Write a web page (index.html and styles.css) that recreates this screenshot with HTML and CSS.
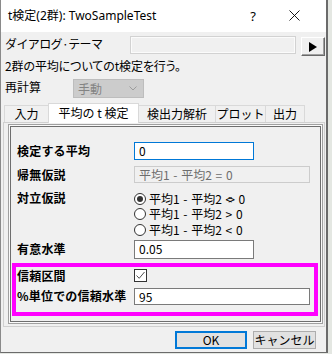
FILE: index.html
```html
<!DOCTYPE html>
<html lang="ja">
<head>
<meta charset="utf-8">
<title>t検定(2群): TwoSampleTest</title>
<link rel="stylesheet" href="styles.css">
</head>
<body>
<div class="window">
  <div class="titlebar">
    <span class="title">t検定(2群): TwoSampleTest</span>
    <span class="help">?</span>
    <span class="close"><svg width="11" height="11" viewBox="0 0 11 11"><path d="M0.5 0.5L10.5 10.5M10.5 0.5L0.5 10.5" stroke="#000" stroke-width="0.9" fill="none"/></svg></span>
  </div>
  <div class="row theme-row">
    <span class="theme-lbl">ダイアログ·テーマ</span>
    <span class="theme-box"></span>
    <span class="arrow-btn"><svg width="8" height="10" viewBox="0 0 8 10"><path d="M0 0L8 5L0 10Z" fill="#000"/></svg></span>
  </div>
  <div class="desc">2群の平均についてのt検定を行う。</div>
  <div class="row recalc-row">
    <span class="recalc-lbl">再計算</span>
    <span class="combo"><span>手動</span><svg width="8" height="5" viewBox="0 0 8 5"><path d="M0.5 0.5L4 4L7.5 0.5" stroke="#9c9c9c" stroke-width="1" fill="none"/></svg></span>
  </div>
  <div class="tabs">
    <span class="tab t1">入力</span>
    <span class="tab active t2">平均の t 検定</span>
    <span class="tab t3">検出力解析</span>
    <span class="tab t4">プロット</span>
    <span class="tab t5">出力</span>
  </div>
  <div class="panel">
    <div class="group">
      <div class="frow r1">
        <span class="flbl">検定する平均</span>
        <span class="input focus short">0</span>
      </div>
      <div class="frow r2">
        <span class="flbl">帰無仮説</span>
        <span class="input disabled long">平均1 - 平均2 = 0</span>
      </div>
      <div class="frow r3">
        <span class="flbl">対立仮説</span>
        <div class="radios">
          <div class="radio-row"><span class="radio on"></span><span>平均1 - 平均2 <span class="ne">&lt;&gt;</span> 0</span></div>
          <div class="radio-row"><span class="radio"></span><span>平均1 - 平均2 &gt; 0</span></div>
          <div class="radio-row"><span class="radio"></span><span>平均1 - 平均2 &lt; 0</span></div>
        </div>
      </div>
      <div class="frow r4">
        <span class="flbl">有意水準</span>
        <span class="input short tall">0.05</span>
      </div>
      <div class="highlight">
        <div class="frow r5">
          <span class="flbl">信頼区間</span>
          <span class="check"><svg width="11" height="11" viewBox="0 0 11 11"><path d="M1.5 5.5L4.2 8.3L9.5 2" stroke="#505050" stroke-width="1" fill="none"/></svg></span>
        </div>
        <div class="frow r6">
          <span class="flbl">%単位での信頼水準</span>
          <span class="input long">95</span>
        </div>
      </div>
    </div>
  </div>
  <div class="footer">
    <span class="btn ok">OK</span>
    <span class="btn cancel">キャンセル</span>
  </div>
</div>
</body>
</html>
```
FILE: styles.css
```css
html, body {
  margin: 0;
  padding: 0;
}
body {
  background: #e4e7e2;
  width: 332px;
  height: 354px;
  overflow: hidden;
  font-family: "Noto Sans CJK JP", "Noto Sans", sans-serif;
  font-size: 12px;
  color: #000;
}
.window {
  width: 325px;
  height: 352px;
  background: #f0f0f0;
  border-left: 1px solid #8a8a8a;
  border-right: 2px solid #6b6b6b;
  border-bottom: 1px solid #6b6b6b;
  display: flex;
  flex-direction: column;
}
.titlebar {
  height: 32px;
  background: #fff;
  display: flex;
  align-items: center;
  padding-left: 7px;
  flex-shrink: 0;
}
.title {
  font-family: "Noto Sans", "Noto Sans CJK JP", sans-serif;
  font-size: 12px;
  line-height: 16px;
  flex: 1;
  margin-top: -1px;
}
.help {
  font-family: "Noto Sans", sans-serif;
  font-size: 13px;
  width: 12px;
  text-align: center;
  margin-right: 30px;
  margin-top: -1px;
}
.close {
  width: 24px;
  display: flex;
  justify-content: flex-start;
  margin-right: 13px;
  margin-top: -1px;
}
.row {
  display: flex;
  padding-left: 4px;
  flex-shrink: 0;
}
.theme-row {
  margin-top: 4px;
  height: 21px;
  align-items: flex-start;
}
.theme-lbl {
  width: 125px;
  line-height: 13px;
  margin-top: 1px;
  letter-spacing: -0.6px;
}
.theme-box {
  width: 164px;
  height: 16px;
  border: 1px solid #d2d2d2;
  box-shadow: inset 0 0 0 1px #fbfbfb;
  background: #f0f0f0;
}
.arrow-btn {
  margin-left: 5px;
  margin-top: 1px;
  width: 22px;
  height: 17px;
  border-top: 1px solid #fff;
  border-left: 1px solid #fff;
  border-right: 1px solid #696969;
  border-bottom: 1px solid #696969;
  box-shadow: inset -1px -1px 0 #a0a0a0;
  display: flex;
  align-items: center;
  justify-content: center;
}
.desc {
  padding-left: 4px;
  margin-top: 2px;
  line-height: 14px;
  height: 14px;
  font-feature-settings: "palt";
  letter-spacing: -0.1px;
  flex-shrink: 0;
}
.recalc-row {
  margin-top: 6px;
  height: 19px;
  align-items: flex-start;
}
.recalc-lbl {
  width: 68px;
  line-height: 14px;
  margin-top: 1px;
}
.combo {
  box-sizing: border-box;
  width: 71px;
  height: 19px;
  background: #cccccc;
  border: 1px solid #bdbdbd;
  color: #838383;
  display: flex;
  align-items: center;
  justify-content: space-between;
  padding: 0 6px 0 4px;
  line-height: 14px;
}
.tabs {
  margin-top: 4px;
  margin-left: 2px;
  height: 20px;
  display: flex;
  align-items: flex-end;
  flex-shrink: 0;
}
.tab {
  box-sizing: border-box;
  height: 17px;
  border: 1px solid #d9d9d9;
  border-bottom: none;
  margin-left: -1px;
  text-align: center;
  line-height: 15px;
  background: #f0f0f0;
}
.tab.t1 { width: 45px; margin-left: 1px; }
.tab.t2 { width: 91px; }
.tab.t3 { width: 78px; }
.tab.t4 { width: 51px; }
.tab.t5 { width: 40px; }
.tab.active {
  height: 20px;
  background: #fff;
  position: relative;
  z-index: 1;
  margin-bottom: -1px;
  line-height: 17px;
}
.panel {
  margin-left: 2px;
  width: 322px;
  height: 205px;
  box-sizing: border-box;
  border: 1px solid #d0d0d0;
  padding: 1px 1px 3px 4px;
  flex-shrink: 0;
}
.group {
  box-sizing: border-box;
  width: 315px;
  height: 200px;
  border: 1px solid #a0a0a0;
  box-shadow: inset 0 0 0 1px #fafafa, inset 0 0 0 2px #6e6e6e;
  padding: 17px 0 0 8px;
  display: flex;
  flex-direction: column;
}
.frow {
  display: flex;
  align-items: center;
}
.flbl {
  width: 117px;
  flex-shrink: 0;
  font-weight: bold;
  line-height: 14px;
  letter-spacing: 0.2px;
}
.input {
  box-sizing: border-box;
  height: 18px;
  border: 1px solid #7a7a7a;
  background: #fff;
  padding-left: 4px;
  line-height: 15px;
}
.input.short { width: 120px; }
.input.long { width: 176px; height: 17px; }
.input.tall { height: 19px; line-height: 16px; }
.input.focus { border-color: #0078d7; }
.input.disabled {
  background: #f0f0f0;
  border-color: #cccccc;
  color: #6d6d6d;
  word-spacing: 1px;
}
.r2 { margin-top: 6px; }
.r3 {
  margin-top: 8px;
  align-items: flex-start;
}
.radios {
  display: flex;
  flex-direction: column;
}
.radio-row {
  height: 15.5px;
  display: flex;
  align-items: center;
  line-height: 14px;
  word-spacing: 1px;
}
.radio {
  box-sizing: border-box;
  width: 12px;
  height: 12px;
  border: 1px solid #333;
  border-radius: 50%;
  background: #fff;
  margin-right: 3px;
  display: flex;
  align-items: center;
  justify-content: center;
}
.radio.on::after {
  content: "";
  width: 6px;
  height: 6px;
  border-radius: 50%;
  background: #333;
}
.ne {
  letter-spacing: -4px;
  margin-right: 4px;
}
.r4 { margin-top: 2px; }
.highlight {
  margin-top: 4px;
  margin-left: -5px;
  width: 306px;
  height: 53px;
  box-sizing: border-box;
  border: 4px solid #ff00ff;
  padding: 2px 0 0 1px;
}
.r5 { height: 14px; }
.check {
  box-sizing: border-box;
  width: 13px;
  height: 13px;
  border: 1px solid #333;
  background: #fff;
  display: flex;
  align-items: center;
  justify-content: center;
}
.r6 { margin-top: 5px; }
.footer {
  display: flex;
  justify-content: flex-end;
  gap: 6px;
  padding-right: 10px;
  margin-top: 4px;
}
.btn {
  box-sizing: border-box;
  height: 18px;
  background: #e1e1e1;
  border: 1px solid #adadad;
  display: flex;
  align-items: center;
  justify-content: center;
  line-height: 14px;
}
.btn.ok {
  width: 72px;
  border: 2px solid #0078d7;
}
.btn.cancel {
  width: 63px;
}
```
